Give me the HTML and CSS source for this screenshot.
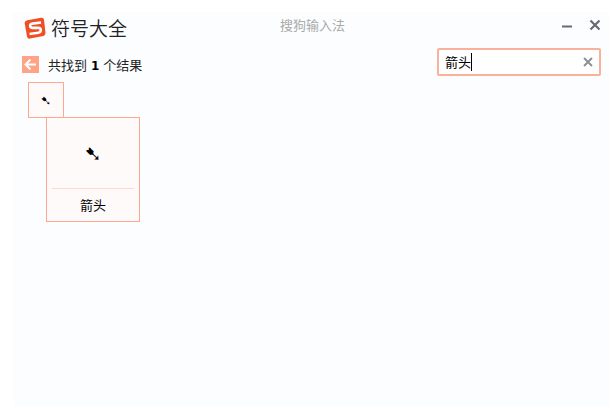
FILE: index.html
```html
<!DOCTYPE html>
<html lang="zh-CN">
<head>
    <meta charset="UTF-8">
    <meta name="viewport" content="width=device-width, initial-scale=1.0">
    <title>符号大全</title>
    <link rel="stylesheet" href="styles.css">
</head>
<body>
<div class="window">
    <header class="titlebar">
        <div class="brand">
            <svg class="logo" viewBox="0 0 22 22" aria-hidden="true">
                <path d="M3.5 3.3 17 .7Q19.500 .3 20 2.600L21.500 16Q21.700 18.200 19.500 18.900L6 21.600Q3.600 22 3.100 19.700L.7 6.500Q.4 4 3.500 3.300Z" fill="#f04e23"/>
                <path d="M17 5.500 8.500 6.600Q5.800 7 6.200 9.200 6.500 11 9 10.900L14 10.700Q16.800 10.700 16.800 13 16.800 15.200 14 15.700L5.500 17" fill="none" stroke="#fff" stroke-width="2.600"/>
            </svg>
            <h1>符号大全</h1>
        </div>
        <span class="app-name">搜狗输入法</span>
        <div class="window-buttons">
            <button type="button" aria-label="最小化">
                <svg viewBox="0 0 12 12"><path d="M1 7.500h10" stroke-width="2"/></svg>
            </button>
            <button type="button" aria-label="关闭">
                <svg viewBox="0 0 12 12"><path d="M1.500 1.500l9 9M10.500 1.500l-9 9" stroke-width="2.200"/></svg>
            </button>
        </div>
    </header>

    <div class="toolbar">
        <button type="button" class="back" aria-label="返回">
            <svg viewBox="0 0 17 17"><path d="M3.500 8.500H14M8.500 3.500l-5 5 5 5"/></svg>
        </button>
        <p class="summary">共找到 <b>1</b> 个结果</p>
        <div class="search">
            <input type="text" value="箭头" aria-label="搜索符号">
            <span class="caret"></span>
            <button type="button" class="clear" aria-label="清除">
                <svg viewBox="0 0 10 10"><path d="M1 1l8 8M9 1l-8 8"/></svg>
            </button>
        </div>
    </div>

    <main class="results">
        <button type="button" class="symbol">➷</button>
        <div class="preview">
            <div class="preview-symbol">➷</div>
            <div class="preview-name">箭头</div>
        </div>
    </main>
</div>
</body>
</html>
```

FILE: styles.css
```css
* {
    box-sizing: border-box;
}

body {
    margin: 0;
    padding: 12px 2px 2px 13px;
    min-height: 100vh;
    display: flex;
    background-color: #fff;
    color: #222;
    font-family: "Noto Sans CJK SC", sans-serif;
    font-size: 13px;
    line-height: 20px;
}

button {
    padding: 0;
    border: none;
    background: none;
    cursor: pointer;
}

svg {
    display: block;
}

.window {
    flex: 1;
    background-color: #fbfdff;
}

/* Title bar */
.titlebar {
    display: grid;
    grid-template-columns: 1fr auto 1fr;
    align-items: start;
    height: 35px;
    padding: 0 8px 0 11px;
}

.brand {
    display: flex;
    align-items: center;
    gap: 5px;
    height: 32px;
}

.logo {
    width: 22px;
    height: 22px;
}

h1 {
    margin: 0;
    font-size: 19px;
    font-weight: 350;
    line-height: 32px;
}

.app-name {
    padding-top: 3px;
    color: #aaa;
}

.window-buttons {
    display: flex;
    justify-content: flex-end;
    gap: 16px;
    padding-top: 7px;
}

.window-buttons svg {
    width: 12px;
    height: 12px;
    stroke: #666a70;
}

/* Search row */
.toolbar {
    display: flex;
    align-items: center;
    padding: 0 8px 0 9px;
}

.back {
    width: 17px;
    height: 17px;
    margin-top: 6px;
    background-color: #ffa285;
}

.back svg {
    fill: none;
    stroke: #fff;
    stroke-width: 2;
}

.summary {
    margin: 8px 0 0 9px;
}

.summary b {
    margin: 0 1px;
    color: #000;
    font-family: "DejaVu Sans", sans-serif;
    font-size: 12px;
}

.search {
    position: relative;
    display: flex;
    align-items: center;
    width: 164px;
    height: 28px;
    margin-left: auto;
    padding: 0 6px;
    border: 2px solid #f9b09c;
    border-radius: 2px;
    background-color: #fff;
}

.search input {
    flex: 1;
    min-width: 0;
    padding: 0;
    border: none;
    outline: none;
    background: none;
    color: #000;
    font: inherit;
}

.caret {
    position: absolute;
    top: 3px;
    left: 32px;
    width: 1px;
    height: 18px;
    background-color: #000;
}

.clear svg {
    width: 10px;
    height: 10px;
    stroke: #8c9096;
    stroke-width: 2;
}

/* Results */
.results {
    position: relative;
    padding: 6px 15px;
}

.symbol,
.preview {
    border: 1px solid #ffa88e;
    background-color: #fffafa;
    color: #000;
    font-family: "DejaVu Sans", sans-serif;
}

.symbol {
    width: 36px;
    height: 36px;
    font-size: 13px;
}

.preview {
    position: absolute;
    top: 41px;
    left: 33px;
    width: 94px;
    padding: 0 5px;
    text-align: center;
}

.preview-symbol {
    height: 71px;
    border-bottom: 1px solid #ffd9ce;
    font-size: 21px;
    line-height: 72px;
}

.preview-name {
    font-family: "Noto Sans CJK SC", sans-serif;
    line-height: 32px;
}
```
